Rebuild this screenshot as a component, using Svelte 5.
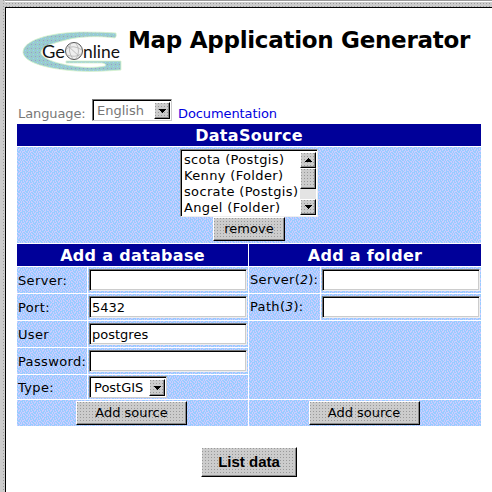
<script>
  const sources = ['scota (Postgis)', 'Kenny (Folder)', 'socrate (Postgis)', 'Angel (Folder)'];
  const fields = [
    { label: 'Server:', value: '' },
    { label: 'Port:', value: '5432' },
    { label: 'User', value: 'postgres' },
    { label: 'Password:', value: '' }
  ];
</script>

{#snippet arrow(up)}
  <span class="arrow">
    <svg width="7" height="4" viewBox="0 0 7 4" shape-rendering="crispEdges">
      <path d={up ? 'M3 0h1v1h1v1h1v1h1v1H0V3h1V2h1V1h1z' : 'M0 0h7v1H6v1H5v1H4v1H3V3H2V2H1V1H0z'} />
    </svg>
  </span>
{/snippet}

<div class="window">
  <div class="top"><i></i></div>
  <div class="page">
    <header>
      <svg class="logo" width="100" height="42" viewBox="0 0 100 42">
        <defs>
          <pattern id="speckle" width="4" height="4" patternUnits="userSpaceOnUse">
            <rect width="4" height="4" fill="#99cccc" />
            <rect width="1" height="1" fill="#9999cc" />
            <rect x="2" y="2" width="1" height="1" fill="#99ccff" />
          </pattern>
        </defs>
        <path d="M93 1Q94 4 92 6C77 4 57 4 43 8C27 12 18 15 18 21C20 28 39 33 58 35C69 36 76 35 82 34Q84 32 79 31L43 31V29H98V38C84 39 69 40 53 39C23 37 0 30 0 20C0 9 25 0 62 0Q80 0 93 1Z" fill="url(#speckle)" stroke="#d8f4cc" stroke-width=".8" />
        <circle cx="51" cy="19" r="8.5" fill="#eee" stroke="#555" />
        <path d="M43 17q7-5 16 1M44 23q8 3 14-1M48 11q-4 8 2 16M53 11q5 8 0 16M45 14l12 11" fill="none" stroke="#aaa" stroke-width=".7" />
        <text x="19" y="25.500" textLength="23" lengthAdjust="spacingAndGlyphs">Ge</text>
        <text x="60" y="25.500" textLength="37" lengthAdjust="spacingAndGlyphs">nline</text>
      </svg>
      <h1>Map Application Generator</h1>
    </header>
    <div class="language">
      <span class="lang-label">Language:</span>
      <div class="select lang"><span>English</span>{@render arrow(false)}</div>
      <span class="doc">Documentation</span>
    </div>
    <main>
      <h2 class="wide"><span>DataSource</span></h2>
      <div class="wide cell sources">
        <div class="list">
          <div class="options">{#each sources as s}<div>{s}</div>{/each}</div>
          <div class="scroll">{@render arrow(true)}<b></b><i></i>{@render arrow(false)}</div>
        </div>
        <button class="remove">remove</button>
      </div>
      <h2 class="half"><span>Add a database</span></h2>
      <h2 class="half"><span>Add a folder</span></h2>
      {#each fields as f, i}
        <span class="cell label">{f.label}</span>
        <div class="cell field"><div class="input">{f.value}</div></div>
        {#if i === 0}
          <span class="cell label raised">Server(<em>2</em>):</span>
          <div class="cell field"><div class="input"></div></div>
        {:else if i === 1}
          <span class="cell label raised">Path(<em>3</em>):</span>
          <div class="cell field"><div class="input"></div></div>
        {:else if i === 2}
          <div class="cell blank"></div>
        {/if}
      {/each}
      <span class="cell label raised">Type:</span>
      <div class="cell field"><div class="select type"><span>PostGIS</span>{@render arrow(false)}</div></div>
      <div class="cell half add"><button>Add source</button></div>
      <div class="cell half add"><button>Add source</button></div>
    </main>
    <button class="submit">List data</button>
  </div>
</div>

<style>
  :global(body) { margin: 0; }
  .window {
    --dots: #ccc conic-gradient(from 270deg at 1px 1px, #999 90deg, #ccc 0) 0 0 / 3px 3px;
    box-sizing: border-box; width: 492px; height: 492px; overflow: hidden;
    display: flex; flex-direction: column; padding-left: 2px;
    background: var(--dots); border-left: 3px solid #ccc;
    font: 13px "DejaVu Sans", sans-serif; color: #000;
  }
  .top { height: 7px; box-sizing: border-box; border-top: 1px solid #999; flex: none; }
  .top i { display: block; height: 1px; background: #fff; }
  .page { flex: 1; background: #fff; border: solid #000; border-width: 1px 0 0 1px; padding-left: 11px; }
  header { display: flex; height: 91px; padding-left: 6px; }
  .logo { margin-top: 24px; flex: none; overflow: visible; }
  .logo text { font: 17px Lato, sans-serif; fill: #111; }
  h1 { margin: 17px 0 0 5px; font: bold 23px/30px "DejaVu Sans", sans-serif; white-space: nowrap; letter-spacing: -.28px; }
  .language { height: 25px; display: flex; }
  .lang-label { width: 75px; color: #777; padding: 7px 0 0 1px; box-sizing: border-box; line-height: 16px; letter-spacing: -.1px; }
  .doc { color: #0000e0; margin-left: 6px; padding-top: 7px; line-height: 16px; letter-spacing: -.1px; }
  .select { box-sizing: border-box; display: flex; justify-content: space-between; background: #fff; border: 1px solid; border-color: #777 #ccc #ccc #777; box-shadow: inset 1px 1px #000; padding: 2px 1px 0 4px; }
  .lang { width: 80px; height: 22px; color: #777; }
  .select span:first-child { line-height: 18px; }
  .arrow { box-sizing: border-box; width: 16px; height: 17px; flex: none; display: flex; align-items: center; justify-content: center; background: var(--dots); border: 1px solid; border-color: #fff #000 #000 #fff; box-shadow: inset -1px -1px #888; }
  main { display: grid; grid-template-columns: 70px 160px 71px 160px; grid-template-rows: 22px 96px 22px repeat(4, 26px) 24px 26px; gap: 1px; width: 464px; }
  h2 { margin: 0; background: #000099; color: #fff; font: bold 16px/23px "DejaVu Sans", sans-serif; letter-spacing: .3px; text-align: center; }
  .wide { grid-column: span 4; }
  .half { grid-column: span 2; }
  .cell {
    min-width: 0;
    background: #b2ccff url("data:image/svg+xml,%3Csvg xmlns='http://www.w3.org/2000/svg' width='8' height='8' shape-rendering='crispEdges'%3E%3Cpath fill='%2399ccff' d='M0 0h8v8H0z'/%3E%3Cpath fill='%23ccccff' d='M0 0h1v2H0zM2 1h1v2H2zM4 0h1v1H4zM6 1h1v2H6zM1 2h1v2H1zM4 2h1v2H4zM7 3h1v2H7zM3 4h1v2H3zM5 4h1v2H5zM0 5h1v1H0zM2 6h1v2H2zM4 6h1v2H4zM6 6h1v2H6zM1 6h1v1H1zM7 7h1v1H7zM6 4h1v1H6zM3 0h1v1H3z'/%3E%3C/svg%3E");
  }
  .sources { display: flex; flex-direction: column; align-items: center; padding-top: 2px; box-sizing: border-box; }
  .list { box-sizing: border-box; width: 138px; height: 68px; display: flex; border: 1px solid; border-color: #888 #eee #eee #888; box-shadow: inset 1px 1px #000; background: #fff; padding: 2px 1px 1px 3px; }
  .options { flex: 1; width: 0; line-height: 16px; white-space: nowrap; letter-spacing: .35px; }
  .scroll { width: 16px; display: flex; flex-direction: column; }
  .scroll .arrow { height: 16px; }
  .scroll b { height: 21px; box-sizing: border-box; background: var(--dots); border: 1px solid; border-color: #fff #000 #000 #fff; box-shadow: inset -1px -1px #888; }
  .scroll i { flex: 1; background: #e4e4e4; }
  button { box-sizing: border-box; display: block; margin: 0; padding: 0; border: 1px solid; border-color: #fff #000 #000 #fff; box-shadow: inset -1px -1px #888; background: var(--dots); font: 13px/20px "DejaVu Sans", sans-serif; color: #000; border-radius: 0; }
  .remove { width: 72px; height: 24px; }
  .label { box-sizing: border-box; padding: 5px 0 0 1px; line-height: 17px; white-space: nowrap; letter-spacing: .35px; }
  .raised { padding-top: 4px; }
  em { font-family: "DejaVu Sans", sans-serif; font-size: 12px; }
  .field { padding: 1px 0 0 1px; box-sizing: border-box; }
  .input { box-sizing: border-box; width: 158px; height: 22px; margin-top: 1px; background: #fff; border: 1px solid; border-color: #777 #eee #eee #777; box-shadow: inset 1px 1px #000, inset -1px -1px #ccc; padding: 1px 2px; line-height: 20px; }
  .type { width: 78px; height: 22px; }
  .blank { grid-column: 3 / span 2; grid-row: 6 / span 3; }
  .add { display: flex; justify-content: center; padding: 1px 2px 0 0; box-sizing: border-box; }
  .add button { width: 111px; height: 24px; }
  .submit { width: 96px; height: 30px; margin: 21px 0 0 184px; font: bold 15px/28px "Liberation Sans", sans-serif; }
</style>
